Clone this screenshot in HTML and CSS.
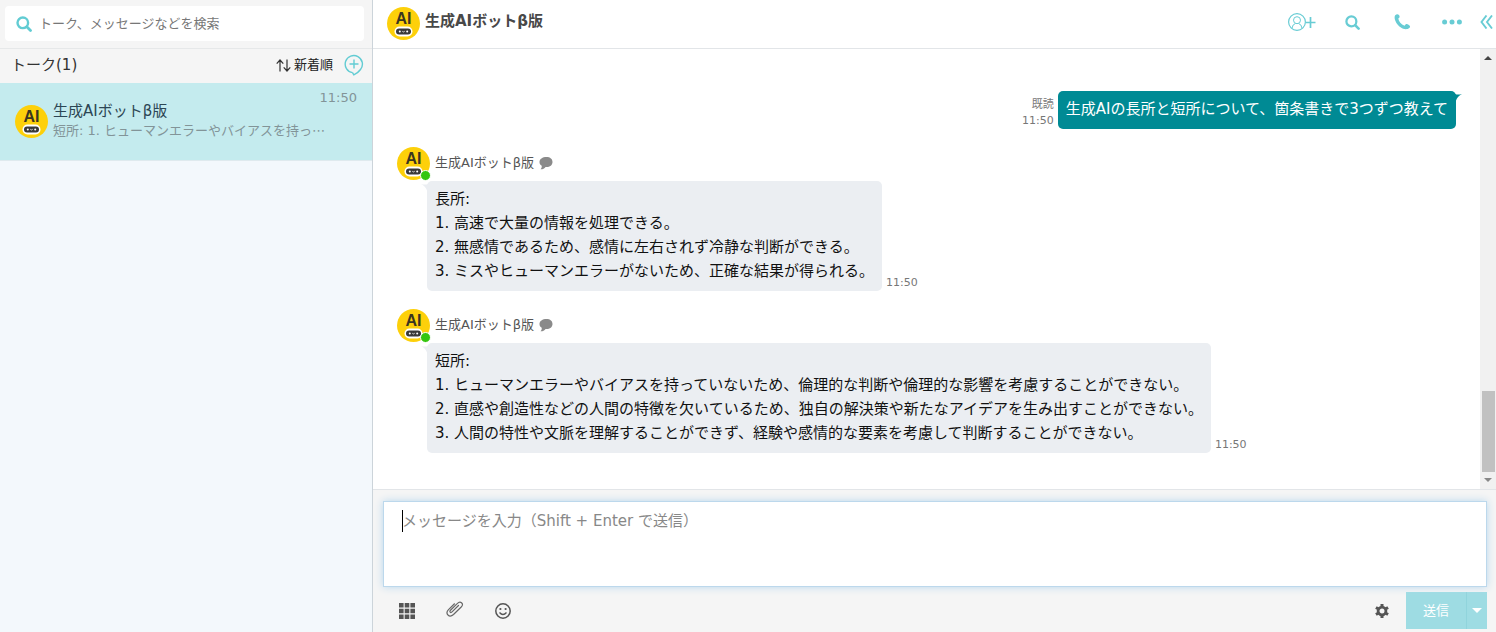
FILE: index.html
```html
<!DOCTYPE html>
<html lang="ja">
<head>
    <meta charset="UTF-8">
    <meta name="viewport" content="width=device-width, initial-scale=1.0">
    <title>トーク</title>
    <link rel="stylesheet" href="styles.css">
</head>
<body>
    <!-- Shared symbols -->
    <svg class="symbols" aria-hidden="true">
        <symbol id="bot" viewBox="0 0 33 33">
            <circle cx="16.500" cy="16.500" r="16.500" fill="#fdd00a"/>
            <text x="16.500" y="17" text-anchor="middle" class="bot-text">AI</text>
            <rect x="7.500" y="19.500" width="18" height="10" rx="5" fill="#fff"/>
            <rect x="9" y="21.500" width="15" height="6" rx="3" fill="#3a3a3a"/>
            <circle cx="12.800" cy="24.500" r="1" fill="#fff"/>
            <circle cx="20.200" cy="24.500" r="1" fill="#fff"/>
            <path d="M15.300 24.300q1.200 1.300 2.400 0" fill="none" stroke="#fff" stroke-width=".8"/>
        </symbol>
        <symbol id="search" viewBox="0 0 16 16">
            <circle cx="6.800" cy="6.800" r="5.300" fill="none" stroke="currentColor" stroke-width="2.400"/>
            <path d="M10.800 10.800l3.700 3.700" stroke="currentColor" stroke-width="2.800" stroke-linecap="round"/>
        </symbol>
        <symbol id="speech" viewBox="0 0 14 13">
            <path d="M7.500 0C11.200 0 13.500 2 13.500 5S11 10 7.500 10H6.600C5.200 11.800 3.600 12.500 1.500 12.300C2.500 11.400 2.900 10.400 2.700 8.800C1.200 8 .5 6.600 .5 5C.5 2 3.500 0 7.500 0z" fill="#8a8a8a"/>
        </symbol>
    </svg>

    <div class="app">
        <aside class="sidebar">
            <div class="search-area">
                <label class="search-box">
                    <svg class="search-icon" aria-hidden="true"><use href="#search"/></svg>
                    <input type="text" placeholder="トーク、メッセージなどを検索" aria-label="トーク、メッセージなどを検索">
                </label>
            </div>
            <div class="list-header">
                <h2>トーク(1)</h2>
                <button type="button" class="sort">
                    <svg width="15" height="13" viewBox="0 0 15 13" fill="none" stroke="#333" stroke-width="1.200" aria-hidden="true">
                        <path d="M4 12.500V1M.7 4.700L4 1l3.300 3.700M11 .5V12M7.700 8.300L11 12l3.300-3.700"/>
                    </svg>
                    新着順
                </button>
                <button type="button" class="new-talk" aria-label="新規トーク">
                    <svg width="20" height="22" viewBox="0 0 20 22" fill="none" stroke="#62ccd3" stroke-width="1.400" aria-hidden="true">
                        <path d="M8.500 18.600A8.600 8.600 0 1 1 16.500 15.500Q14.500 18.500 9.800 20.800L8.500 18.600M10 5.500v9M5.500 10h9"/>
                    </svg>
                </button>
            </div>
            <a href="#" class="talk">
                <svg class="avatar" aria-hidden="true"><use href="#bot"/></svg>
                <span class="talk-body">
                    <span class="talk-name">生成AIボットβ版</span>
                    <span class="talk-preview">短所: 1. ヒューマンエラーやバイアスを持っ⋯</span>
                </span>
                <time class="talk-time">11:50</time>
            </a>
        </aside>

        <main class="room">
            <header class="room-header">
                <svg class="avatar" aria-hidden="true"><use href="#bot"/></svg>
                <h1>生成AIボットβ版</h1>
                <nav class="actions">
                    <button type="button" aria-label="メンバーを追加">
                        <svg width="28" height="18" viewBox="0 0 28 18" fill="none" stroke="currentColor" aria-hidden="true">
                            <circle cx="9" cy="9" r="8.400" stroke-width="1.200"/>
                            <circle cx="9" cy="7.200" r="3.500"/>
                            <path d="M4 15.200Q4.500 11.200 7.500 10.500M10.500 10.500Q13.500 11.200 14 15.200"/>
                            <path d="M22.500 4v11M17.500 9.500h10" stroke-width="1.700"/>
                        </svg>
                    </button>
                    <button type="button" aria-label="検索">
                        <svg width="15" height="15" aria-hidden="true"><use href="#search"/></svg>
                    </button>
                    <button type="button" class="call" aria-label="通話">
                        <svg width="17" height="16" viewBox="0 0 17 16" aria-hidden="true">
                            <path d="M1.200 1.300C2.400 .1 4 -.1 4.900 1C6 2.400 5.900 3.500 4.300 4.600C4.800 7.800 7 10.600 10.600 11.700C11.500 9.900 12.900 9.600 14.500 10.700C16.400 11.900 16.500 13 15.200 14.100C13.300 15.900 9.600 15.700 6.200 13.100C2.500 10.300-.8 4.300 1.200 1.300z" fill="currentColor"/>
                        </svg>
                    </button>
                    <button type="button" class="more" aria-label="その他">
                        <svg width="20" height="6" viewBox="0 0 20 6" fill="currentColor" aria-hidden="true">
                            <circle cx="2.600" cy="3" r="2.500"/><circle cx="10" cy="3" r="2.500"/><circle cx="17.400" cy="3" r="2.500"/>
                        </svg>
                    </button>
                    <button type="button" class="fold" aria-label="パネルを開く">
                        <svg width="13" height="14" viewBox="0 0 13 14" fill="none" stroke="currentColor" stroke-width="1.900" aria-hidden="true">
                            <path d="M6.500 .5L1.500 7l5 6.500M12 .5L7 7l5 6.500"/>
                        </svg>
                    </button>
                </nav>
            </header>

            <div class="chat">
                <div class="messages">
                    <div class="message mine">
                        <div class="meta">
                            <span>既読</span>
                            <time>11:50</time>
                        </div>
                        <div class="bubble">
                            <p>生成AIの長所と短所について、箇条書きで3つずつ教えて</p>
                            <svg class="tail" viewBox="0 0 8 10" aria-hidden="true"><path d="M0 3Q3 4 7 3Q2.500 5 1 9.500H0z" fill="#008a94"/></svg>
                        </div>
                    </div>

                    <div class="message">
                        <div class="sender">
                            <span class="presence">
                                <svg class="avatar" aria-hidden="true"><use href="#bot"/></svg>
                                <span class="online"></span>
                            </span>
                            <span>生成AIボットβ版</span>
                            <svg class="speech" aria-hidden="true"><use href="#speech"/></svg>
                        </div>
                        <div class="reply">
                            <div class="bubble">
                                <p>長所:</p>
                                <p>1. 高速で大量の情報を処理できる。</p>
                                <p>2. 無感情であるため、感情に左右されず冷静な判断ができる。</p>
                                <p>3. ミスやヒューマンエラーがないため、正確な結果が得られる。</p>
                                <svg class="tail" viewBox="0 0 8 10" aria-hidden="true"><path d="M8 3Q5 4 1 3Q5.500 5 7 9.500H8z" fill="#ebeef2"/></svg>
                            </div>
                            <time>11:50</time>
                        </div>
                    </div>

                    <div class="message">
                        <div class="sender">
                            <span class="presence">
                                <svg class="avatar" aria-hidden="true"><use href="#bot"/></svg>
                                <span class="online"></span>
                            </span>
                            <span>生成AIボットβ版</span>
                            <svg class="speech" aria-hidden="true"><use href="#speech"/></svg>
                        </div>
                        <div class="reply">
                            <div class="bubble">
                                <p>短所:</p>
                                <p>1. ヒューマンエラーやバイアスを持っていないため、倫理的な判断や倫理的な影響を考慮することができない。</p>
                                <p>2. 直感や創造性などの人間の特徴を欠いているため、独自の解決策や新たなアイデアを生み出すことができない。</p>
                                <p>3. 人間の特性や文脈を理解することができず、経験や感情的な要素を考慮して判断することができない。</p>
                                <svg class="tail" viewBox="0 0 8 10" aria-hidden="true"><path d="M8 3Q5 4 1 3Q5.500 5 7 9.500H8z" fill="#ebeef2"/></svg>
                            </div>
                            <time>11:50</time>
                        </div>
                    </div>
                </div>

                <div class="scrollbar" aria-hidden="true">
                    <svg width="8" height="4" viewBox="0 0 8 4"><path d="M0 4L4 0l4 4z" fill="#444"/></svg>
                    <div class="thumb"></div>
                    <svg width="8" height="4" viewBox="0 0 8 4"><path d="M0 0h8L4 4z" fill="#888"/></svg>
                </div>
            </div>

            <form class="composer">
                <div class="editor">
                    <textarea placeholder="メッセージを入力（Shift + Enter で送信）" aria-label="メッセージを入力"></textarea>
                    <span class="caret"></span>
                </div>
                <div class="toolbar">
                    <button type="button" aria-label="アプリ">
                        <svg width="16" height="16" viewBox="0 0 16 16" fill="#555" aria-hidden="true">
                            <path d="M0 0h4.600v4.600H0zM5.700 0h4.600v4.600H5.700zM11.400 0H16v4.600h-4.600zM0 5.700h4.600v4.600H0zM5.700 5.700h4.600v4.600H5.700zM11.400 5.700H16v4.600h-4.600zM0 11.400h4.600V16H0zM5.700 11.400h4.600V16H5.700zM11.400 11.400H16V16h-4.600z"/>
                        </svg>
                    </button>
                    <button type="button" class="attach" aria-label="ファイルを添付">
                        <svg width="18" height="16" viewBox="0 0 18 16" fill="none" stroke="#666" stroke-width="1.200" stroke-linecap="round" aria-hidden="true">
                            <path d="M12.500 4.500L6.300 10.700Q5 12 4.200 11.200T4.700 9L11.200 2.700Q13.500 .3 15.500 1.700Q17.600 3.500 15.200 6L7.500 13.500Q4.300 16.300 2 14Q-.3 11.500 2.500 8.700L8.500 2.800"/>
                        </svg>
                    </button>
                    <button type="button" aria-label="スタンプ">
                        <svg width="16" height="16" viewBox="0 0 16 16" fill="none" stroke="#555" stroke-width="1.500" aria-hidden="true">
                            <circle cx="8" cy="8" r="7.200"/>
                            <path d="M4.500 9.500Q8 13.500 11.500 9.500" stroke-width="1.300"/>
                            <circle cx="5.400" cy="6" r="1.100" fill="#555" stroke="none"/>
                            <circle cx="10.600" cy="6" r="1.100" fill="#555" stroke="none"/>
                        </svg>
                    </button>
                    <button type="button" class="settings" aria-label="設定">
                        <svg width="16" height="16" viewBox="0 0 16 16" fill="none" stroke="#555" aria-hidden="true">
                            <circle cx="8" cy="8" r="3.900" stroke-width="2.800"/>
                            <path d="M8 1v2.500M8 12.500V15M1.940 4.500l2.160 1.250M11.900 10.250l2.160 1.250M1.940 11.500l2.160-1.250M11.900 5.750l2.160-1.250" stroke-width="3"/>
                        </svg>
                    </button>
                    <div class="send">
                        <button type="submit" class="send-main">送信</button>
                        <button type="button" class="send-menu" aria-label="送信オプション">
                            <svg width="10" height="5" viewBox="0 0 10 5" aria-hidden="true"><path d="M0 0h10L5 5z" fill="#fff"/></svg>
                        </button>
                    </div>
                </div>
            </form>
        </main>
    </div>
</body>
</html>
```
FILE: styles.css
```css
* {
    margin: 0;
    padding: 0;
    box-sizing: border-box;
}

body {
    font-family: "DejaVu Sans", "Noto Sans CJK JP", sans-serif;
    font-size: 15px;
    line-height: 24px;
    color: #111;
    background: #fff;
}

button,
input,
textarea {
    font: inherit;
    color: inherit;
    border: 0;
    background: none;
    outline: 0;
}

button {
    display: flex;
    align-items: center;
    justify-content: center;
    cursor: pointer;
}

svg {
    display: block;
    flex-shrink: 0;
}

.symbols {
    display: none;
}

.bot-text {
    font-family: "Liberation Sans", sans-serif;
    font-size: 16px;
    font-weight: 700;
    fill: #3a3520;
}

.app {
    display: flex;
    height: 100vh;
}

.avatar {
    width: 33px;
    height: 33px;
}

/* Sidebar */
.sidebar {
    width: 373px;
    flex-shrink: 0;
    border-right: 1px solid #ccd4da;
    background: #f3f8fc;
}

.search-area {
    height: 49px;
    padding: 6px 8px 8px 5px;
    border-bottom: 1px solid #e6e8e9;
    background: #f5f5f5;
}

.search-box {
    display: flex;
    align-items: center;
    gap: 7px;
    height: 35px;
    padding: 0 11px;
    border-radius: 4px;
    background: #fff;
    font-size: 13px;
}

.search-box input {
    flex: 1;
}

.search-icon {
    width: 16px;
    height: 16px;
    color: #62ccd3;
}

input::placeholder {
    color: #777;
}

.list-header {
    display: flex;
    align-items: center;
    height: 34px;
    padding: 0 8px 2px 11px;
    background: #f5f5f5;
}

.list-header h2 {
    flex: 1;
    font-size: 15px;
    font-weight: 400;
    color: #333;
}

.sort {
    gap: 3px;
    margin-right: 11px;
    font-size: 13px;
    color: #222;
}

.talk {
    display: flex;
    align-items: center;
    gap: 5px;
    height: 78px;
    padding: 0 15px;
    border-bottom: 1px solid #dfeaee;
    background: #c4ebee;
    text-decoration: none;
}

.talk-body {
    display: flex;
    flex: 1;
    flex-direction: column;
    padding-bottom: 2px;
    line-height: 20px;
    white-space: nowrap;
}

.talk-name {
    color: #2c4654;
}

.talk-preview {
    font-size: 13px;
    color: #829498;
}

.talk-time {
    align-self: flex-start;
    margin: 3px 0 0 -40px;
    font-size: 13px;
    color: #829498;
}

/* Room */
.room {
    display: flex;
    flex: 1;
    flex-direction: column;
    min-width: 0;
}

.room-header {
    display: flex;
    align-items: center;
    gap: 5px;
    height: 49px;
    padding: 0 3px 2px 14px;
    border-bottom: 1px solid #e2e5e8;
}

.room-header h1 {
    flex: 1;
    padding-bottom: 4px;
    font-size: 15px;
    color: #484848;
}

.actions {
    display: flex;
    align-items: center;
    gap: 29px;
    padding-bottom: 2px;
    color: #68ccd4;
}

.call {
    margin-left: 5px;
}

.more {
    margin-left: 2px;
}

.fold {
    margin-left: -11px;
}

.chat {
    display: flex;
    flex: 1;
    min-height: 0;
}

.messages {
    display: flex;
    flex: 1;
    flex-direction: column;
    gap: 18px;
    padding: 42px 24px 0;
    overflow: hidden;
}

.mine {
    display: flex;
    align-items: flex-end;
    justify-content: flex-end;
    gap: 4px;
}

.meta {
    display: flex;
    flex-direction: column;
    align-items: flex-end;
    font-size: 11px;
    line-height: 16px;
    color: #777;
}

.bubble {
    position: relative;
    padding: 6px 8px 8px;
    border-radius: 5px;
    background: #ebeef2;
}

.mine .bubble {
    background: #008a94;
    color: #fff;
}

.tail {
    position: absolute;
    top: 0;
    left: -7px;
    width: 8px;
    height: 10px;
}

.mine .tail {
    right: -7px;
    left: auto;
}

.sender {
    display: flex;
    align-items: center;
    gap: 5px;
    height: 34px;
    padding-bottom: 2px;
    font-size: 13px;
    line-height: 20px;
    color: #555;
}

.presence {
    position: relative;
}

.online {
    position: absolute;
    right: -1px;
    bottom: -1px;
    width: 11px;
    height: 11px;
    border: 1px solid #fff;
    border-radius: 50%;
    background: #35c60f;
}

.speech {
    width: 14px;
    height: 13px;
}

.reply {
    display: flex;
    align-items: flex-end;
    gap: 4px;
    margin-left: 30px;
}

.reply time {
    font-size: 11px;
    line-height: 16px;
    color: #777;
}

.scrollbar {
    display: flex;
    flex-direction: column;
    align-items: center;
    width: 16px;
    padding: 7px 0;
    background: #f1f1f1;
}

.thumb {
    width: 13px;
    height: 81px;
    margin: auto 0 6px;
    background: #c1c1c1;
}

/* Composer */
.composer {
    padding: 11px 9px 3px 10px;
    border-top: 1px solid #e2e5e8;
    background: #f5f5f5;
}

.editor {
    position: relative;
    border: 1px solid #bcd8ec;
    background: #fff;
    box-shadow: 0 0 8px #b9d8ee;
}

.editor textarea {
    display: block;
    width: 100%;
    height: 84px;
    padding: 7px 18px;
    resize: none;
}

textarea::placeholder {
    color: #888;
}

.caret {
    position: absolute;
    top: 8px;
    left: 18px;
    width: 1px;
    height: 22px;
    background: #000;
}

.toolbar {
    display: flex;
    align-items: center;
    gap: 31px;
    padding: 5px 0 0 16px;
}

.attach {
    padding-bottom: 4px;
}

.settings {
    margin-left: auto;
}

.send {
    display: flex;
    height: 37px;
    margin-left: -15px;
}

.send-main {
    width: 60px;
    background: #9edce3;
    color: #fff;
    font-size: 13px;
}

.send-menu {
    width: 21px;
    border-left: 1px solid #90d4dc;
    background: #9edce3;
}
```
